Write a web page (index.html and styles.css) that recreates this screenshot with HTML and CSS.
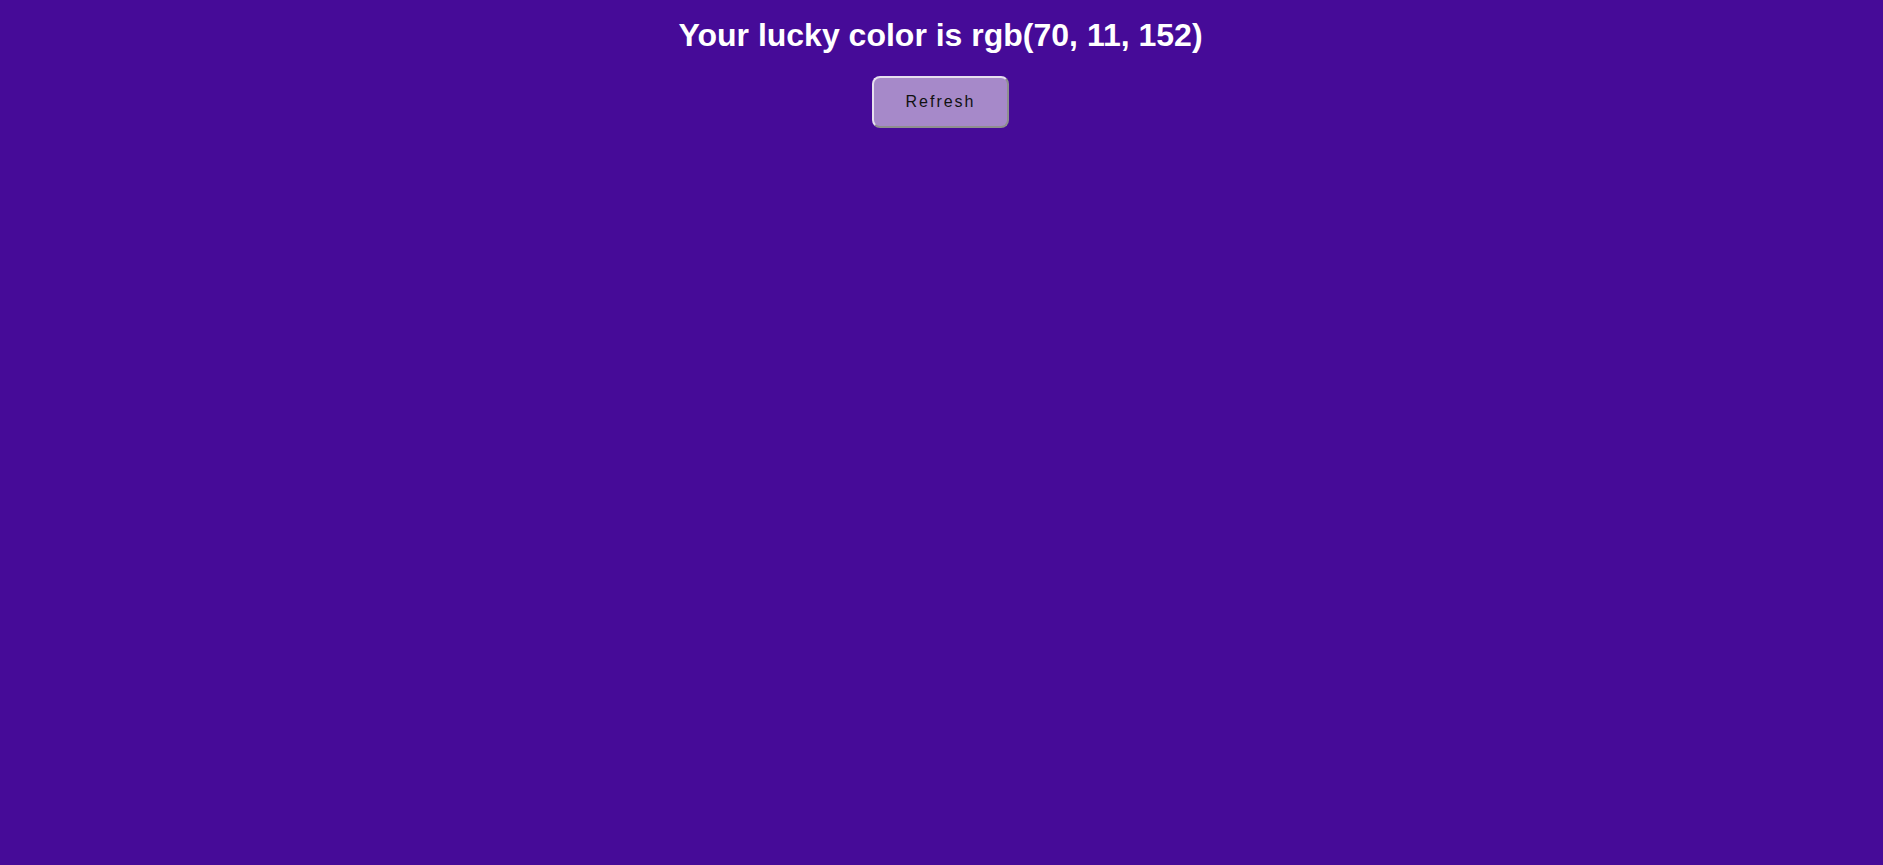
FILE: index.html
```html
<!DOCTYPE html>
<html>
<head>
<meta charset="utf-8">
<link rel="stylesheet" href="styles.css">
</head>
<body>
<main class="page">
  <h1 class="title">Your lucky color is rgb(70, 11, 152)</h1>
  <button class="refresh">Refresh</button>
</main>
</body>
</html>
```
FILE: styles.css
```css
html, body {
  margin: 0;
  height: 100%;
}
body {
  background: rgb(70, 11, 152);
  font-family: "Liberation Sans", Arial, sans-serif;
}
.page {
  display: flex;
  flex-direction: column;
  align-items: center;
  padding-top: 17px;
  padding-right: 2px;
}
.title {
  margin: 0;
  font-size: 32px;
  font-weight: bold;
  color: #fff;
  line-height: 37px;
}
.refresh {
  margin-top: 22px;
  width: 137px;
  height: 52px;
  border: 2px solid;
  border-color: #e6e0ee #8f8f8f #8f8f8f #e6e0ee;
  border-radius: 8px;
  background: #a689c9;
  color: #111;
  font-family: "Liberation Sans", Arial, sans-serif;
  font-size: 16px;
  letter-spacing: 2px;
  cursor: pointer;
}
```
